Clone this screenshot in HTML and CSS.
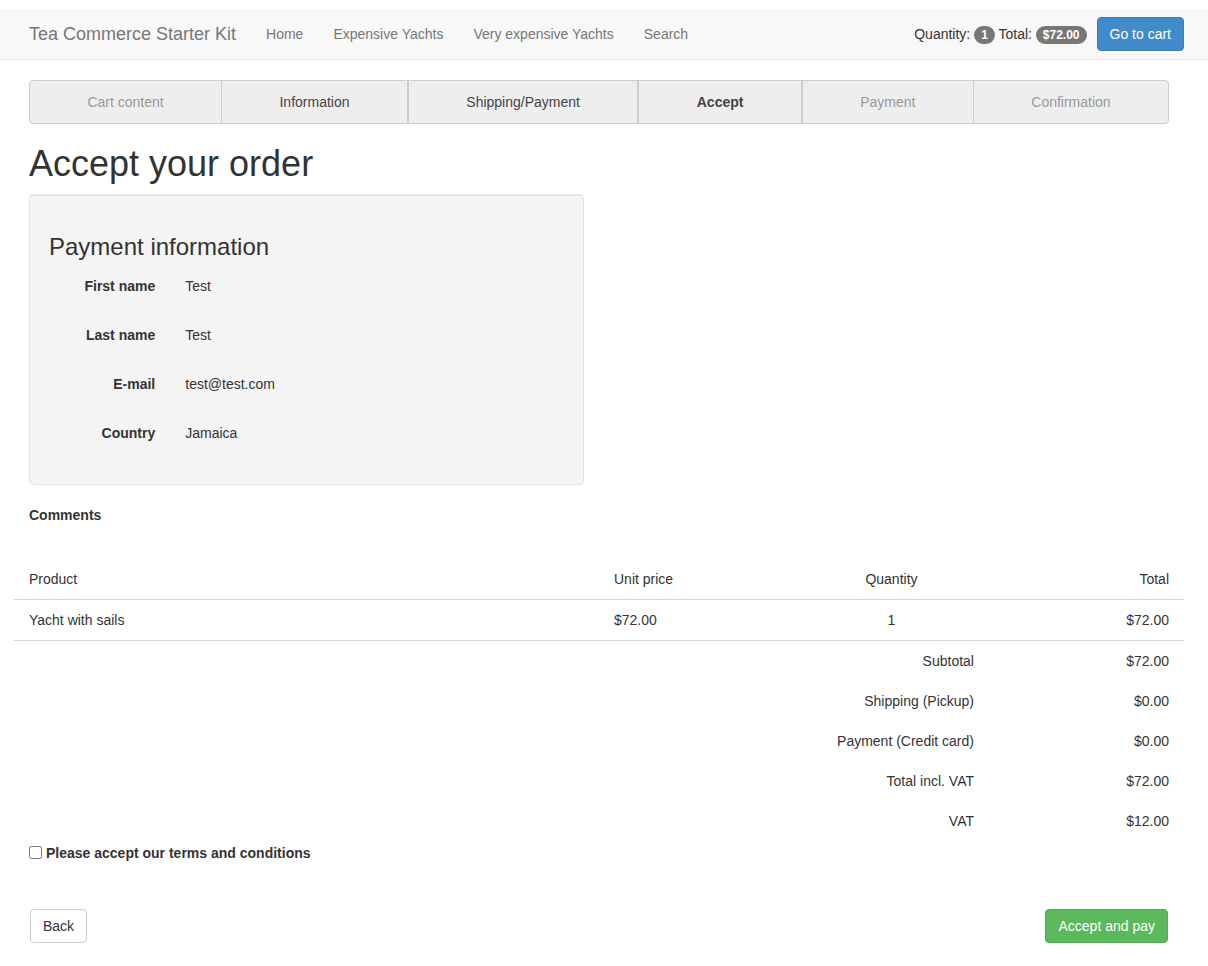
FILE: index.html
```html
<!DOCTYPE html>
<html lang="en">
<head>
<meta charset="utf-8">
<title>Accept your order</title>
<link rel="stylesheet" href="styles.css">
</head>
<body>
<div class="page">
  <nav class="navbar">
    <div class="container nav-inner">
      <a class="brand" href="#">Tea Commerce Starter Kit</a>
      <ul class="nav-links">
        <li><a href="#">Home</a></li>
        <li><a href="#">Expensive Yachts</a></li>
        <li><a href="#">Very expensive Yachts</a></li>
        <li><a href="#">Search</a></li>
      </ul>
      <div class="nav-right">
        <span class="nav-text">Quantity: <span class="badge">1</span> Total: <span class="badge">$72.00</span></span>
        <a class="btn btn-primary" href="#">Go to cart</a>
      </div>
    </div>
  </nav>

  <div class="container">
    <div class="steps">
      <div class="step done-light">Cart content</div>
      <div class="step done bordered">Information</div>
      <div class="step done bordered">Shipping/Payment</div>
      <div class="step current bordered">Accept</div>
      <div class="step future bordered">Payment</div>
      <div class="step future">Confirmation</div>
    </div>

    <h1 class="title">Accept your order</h1>

    <div class="row">
      <div class="col-half">
        <div class="well">
          <h3 class="well-title">Payment information</h3>
          <div class="form-group">
            <div class="control-label">First name</div>
            <div class="control-value">Test</div>
          </div>
          <div class="form-group">
            <div class="control-label">Last name</div>
            <div class="control-value">Test</div>
          </div>
          <div class="form-group">
            <div class="control-label">E-mail</div>
            <div class="control-value">test@test.com</div>
          </div>
          <div class="form-group">
            <div class="control-label">Country</div>
            <div class="control-value">Jamaica</div>
          </div>
        </div>
      </div>
    </div>

    <div class="comments">
      <div class="comments-label">Comments</div>
    </div>

    <table class="order-table">
      <colgroup>
        <col class="c-product">
        <col class="c-small">
        <col class="c-small">
        <col class="c-small">
      </colgroup>
      <thead>
        <tr>
          <th>Product</th>
          <th>Unit price</th>
          <th class="center">Quantity</th>
          <th class="right">Total</th>
        </tr>
      </thead>
      <tbody>
        <tr class="item-row">
          <td>Yacht with sails</td>
          <td>$72.00</td>
          <td class="center">1</td>
          <td class="right">$72.00</td>
        </tr>
        <tr class="sum-row">
          <td colspan="3" class="right">Subtotal</td>
          <td class="right">$72.00</td>
        </tr>
        <tr class="sum-row">
          <td colspan="3" class="right">Shipping (Pickup)</td>
          <td class="right">$0.00</td>
        </tr>
        <tr class="sum-row">
          <td colspan="3" class="right">Payment (Credit card)</td>
          <td class="right">$0.00</td>
        </tr>
        <tr class="sum-row">
          <td colspan="3" class="right">Total incl. VAT</td>
          <td class="right">$72.00</td>
        </tr>
        <tr class="sum-row">
          <td colspan="3" class="right">VAT</td>
          <td class="right">$12.00</td>
        </tr>
      </tbody>
    </table>

    <label class="checkbox">
      <input type="checkbox">
      <span>Please accept our terms and conditions</span>
    </label>

    <div class="actions">
      <a class="btn btn-default" href="#">Back</a>
      <a class="btn btn-success" href="#">Accept and pay</a>
    </div>
  </div>
</div>
</body>
</html>
```

FILE: styles.css
```css
* {
  box-sizing: border-box;
}

html, body {
  margin: 0;
  padding: 0;
  background: #fff;
}

body {
  font-family: "Liberation Sans", Arial, Helvetica, sans-serif;
  font-size: 14px;
  line-height: 20px;
  color: #333;
}

a {
  text-decoration: none;
}

.page {
  padding-top: 9px;
}

.container {
  width: 1170px;
  margin-left: 14px;
  padding: 0 15px;
}

/* Navbar */
.navbar {
  background: #f8f8f8;
  border-bottom: 1px solid #e7e7e7;
  margin-bottom: 20px;
}

.nav-inner {
  display: flex;
  align-items: center;
  height: 50px;
}

.brand {
  font-size: 18px;
  line-height: 20px;
  color: #777;
  padding-right: 15px;
}

.nav-links {
  display: flex;
  list-style: none;
  margin: 0;
  padding: 0;
}

.nav-links a {
  display: block;
  padding: 15px;
  color: #777;
  line-height: 20px;
}

.nav-right {
  margin-left: auto;
  margin-right: -15px;
  display: flex;
  align-items: center;
}

.nav-text {
  color: #333;
}

.badge {
  display: inline-block;
  min-width: 10px;
  padding: 3px 7px;
  font-size: 12px;
  font-weight: bold;
  line-height: 1;
  color: #fff;
  text-align: center;
  white-space: nowrap;
  vertical-align: baseline;
  background-color: #777;
  border-radius: 10px;
}

.btn {
  display: inline-block;
  padding: 6px 12px;
  font-size: 14px;
  line-height: 20px;
  border: 1px solid transparent;
  border-radius: 4px;
  text-align: center;
  white-space: nowrap;
}

.btn-primary {
  margin-left: 10px;
  color: #fff;
  background: #428bca;
  border-color: #357ebd;
}

.btn-default {
  color: #333;
  background: #fff;
  border-color: #ccc;
}

.btn-success {
  color: #fff;
  background: #5cb85c;
  border-color: #4cae4c;
}

/* Steps */
.steps {
  display: flex;
  background: #eee;
  border: 1px solid #ccc;
  border-radius: 4px;
}

.step {
  flex: 1 1 auto;
  text-align: center;
  padding: 11px 0;
  line-height: 20px;
  white-space: nowrap;
}

.step.bordered {
  border-left: 1px solid #ccc;
  border-right: 1px solid #ccc;
}

.step.done-light {
  color: #999;
}

.step.done {
  color: #444;
}

.step.current {
  color: #444;
  font-weight: bold;
}

.step.future {
  color: #999;
}

/* Heading */
.title {
  font-size: 36px;
  font-weight: 500;
  line-height: 1.1;
  margin: 20px 0 10px;
  color: #333;
}

.row {
  display: flex;
  margin: 0 -15px;
}

.col-half {
  width: 50%;
  padding: 0 15px;
}

.well {
  background: #f4f4f4;
  border: 1px solid #e3e3e3;
  border-radius: 4px;
  padding: 19px;
  margin-bottom: 20px;
  box-shadow: inset 0 1px 1px rgba(0, 0, 0, 0.05);
}

.well-title {
  font-size: 24px;
  font-weight: 500;
  line-height: 1.1;
  margin: 20px 0 9px;
  color: #333;
}

.form-group {
  display: flex;
  margin: 0 -15px 15px;
}

.control-label {
  width: 25%;
  padding: 7px 15px 0;
  text-align: right;
  font-weight: bold;
}

.control-value {
  width: 75%;
  padding: 7px 15px;
  min-height: 34px;
}

/* Comments */
.comments {
  margin-bottom: 35px;
}

.comments-label {
  font-weight: bold;
  margin-bottom: 5px;
}

/* Table */
.order-table {
  width: calc(100% + 30px);
  margin: 0 -15px;
  border-collapse: collapse;
  table-layout: fixed;
}

.c-product {
  width: 50%;
}

.c-small {
  width: 16.6667%;
}

.order-table th,
.order-table td {
  padding: 10px 15px;
  line-height: 20px;
  font-weight: normal;
  text-align: left;
  vertical-align: top;
}

.order-table thead th {
  padding-top: 9px;
  padding-bottom: 10px;
  border-bottom: 1px solid #d5d5d5;
}

.order-table .item-row td {
  border-bottom: 1px solid #d5d5d5;
}

.order-table .center {
  text-align: center;
}

.order-table .right {
  text-align: right;
}

/* Checkbox */
.checkbox {
  display: flex;
  align-items: center;
  margin-top: 2px;
  height: 20px;
  font-weight: bold;
}

.checkbox input {
  width: 13px;
  height: 13px;
  margin: 0 4px 0 0;
}

/* Actions */
.actions {
  display: flex;
  justify-content: space-between;
  margin-top: 46px;
  padding-left: 1px;
  padding-right: 1px;
}
```
